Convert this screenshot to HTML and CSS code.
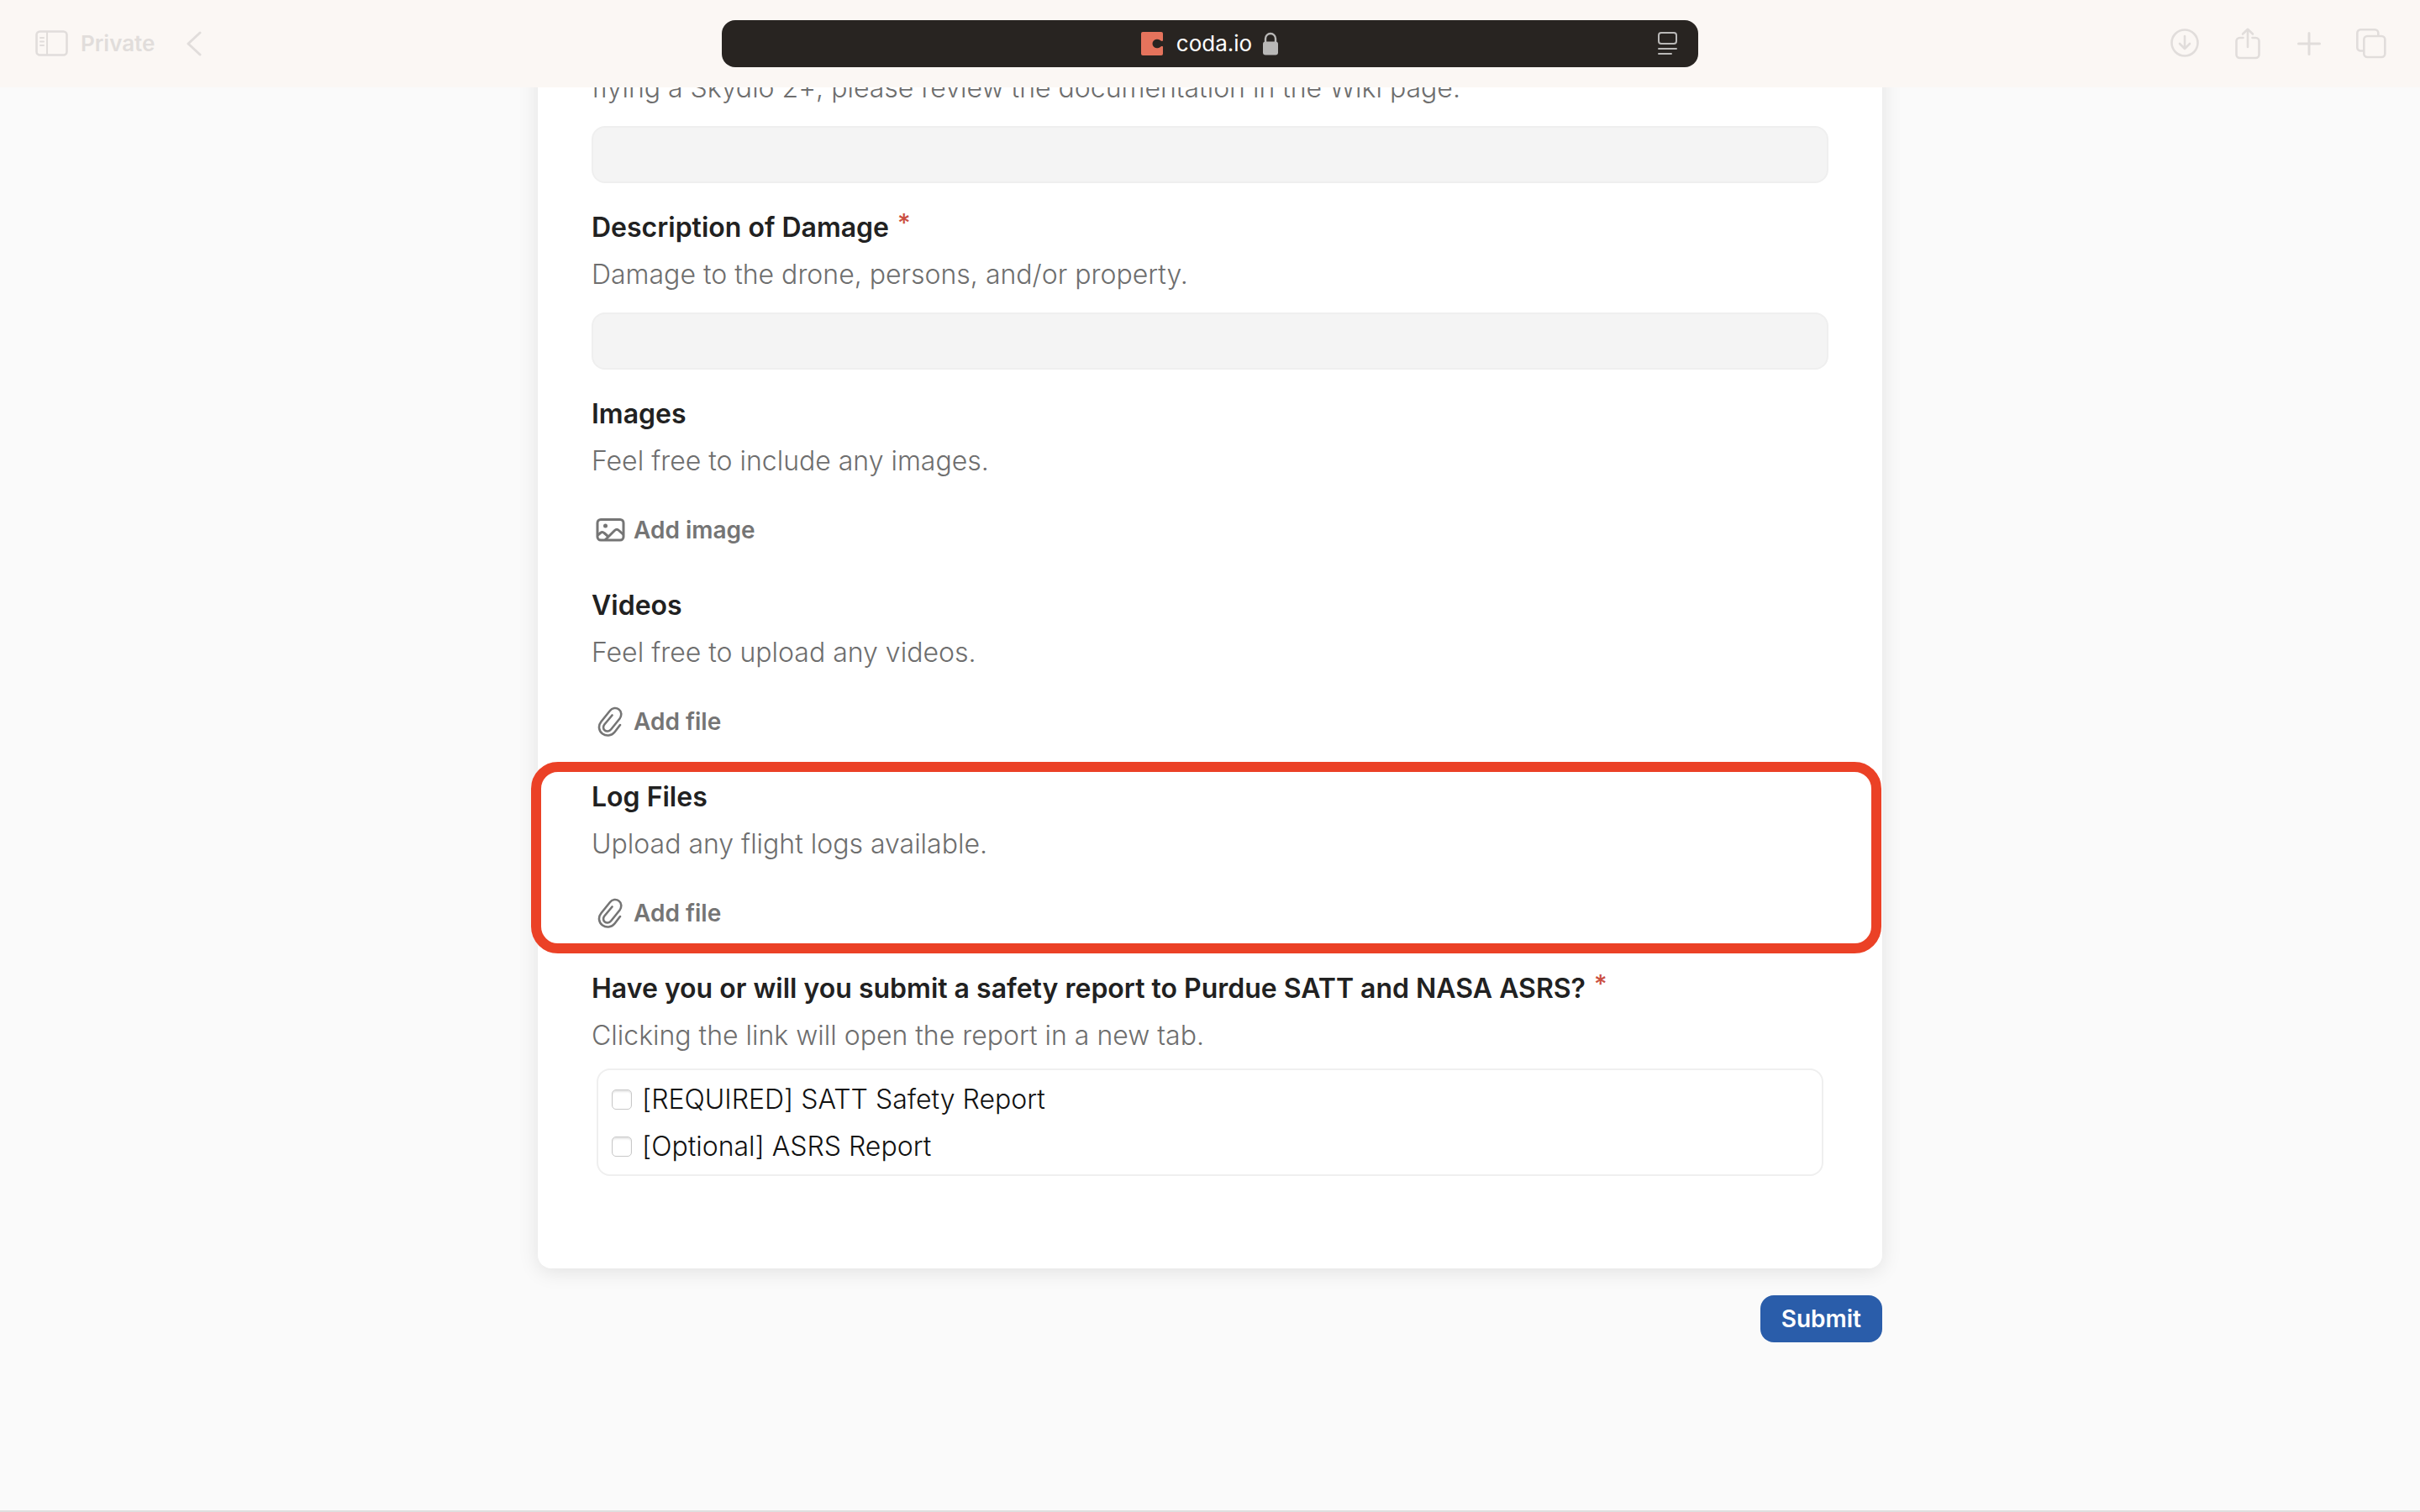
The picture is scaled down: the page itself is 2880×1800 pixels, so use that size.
FILE: index.html
```html
<!DOCTYPE html>
<html lang="en">
<head>
<meta charset="utf-8">
<meta name="viewport" content="width=device-width, initial-scale=1">
<title>coda.io</title>
<link rel="stylesheet" href="styles.css">
</head>
<body>
<svg class="sprite" aria-hidden="true">
  <symbol id="clip" viewBox="0 0 36 36"><path transform="translate(1 0)" fill="none" stroke="currentColor" stroke-width="2.600" stroke-linecap="round" stroke-linejoin="round" d="M29 22 L22.500 30.500 C18.500 35.500 12 35.500 8 32.500 C3.500 29 2.500 23 6.500 18 L17 5 C19.500 1.500 24.500 1 27.500 3.500 C31 6 31 11 28.500 14.500 L18 27.500 C16 30 12.500 30 10.800 28.500 C8.700 27 8.500 23.800 10.300 21.500 L19.500 10.500"/></symbol>
</svg>
<header class="toolbar">
  <nav class="tools tools-left" aria-label="Window">
    <button class="tool tool-private" type="button">
      <svg width="40" height="32" viewBox="0 0 40 32" fill="none" stroke="currentColor" stroke-width="2" stroke-linecap="round"><rect x="1.500" y="1.500" width="36" height="28" rx="4" stroke-width="2.600"/><path d="M14 2v27M6 9h4M6 13.500h4M6 18h4"/></svg>
      <span>Private</span>
    </button>
    <button class="tool" type="button" aria-label="Back">
      <svg width="18" height="30" viewBox="0 0 18 30" fill="none" stroke="currentColor" stroke-width="3" stroke-linecap="round" stroke-linejoin="round"><path d="M16 2 2 15l14 13"/></svg>
    </button>
  </nav>
  <div class="address">
    <a class="site" href="#">
      <svg class="favicon" width="26" height="28" viewBox="0 0 26 28"><path fill="#e5735c" d="M2 0h22a2 2 0 0 1 2 2v8.500c-1.500 1-2.500 0-3.500-.8C21 8.700 19.500 8.500 18.500 8.700 15.500 9 13.500 11.300 13.500 14s2 5 5 5.300c1 .2 2.500 0 4-1 1-.8 2-1.800 3.500-.8V26a2 2 0 0 1-2 2H2a2 2 0 0 1-2-2V2a2 2 0 0 1 2-2z"/></svg>
      <span>coda.io</span>
      <svg width="20" height="28" viewBox="0 0 20 28"><path d="M4 13V8a6 6 0 0 1 12 0v5" fill="none" stroke="#b9b8b7" stroke-width="2.400"/><rect x="1" y="11.500" width="18" height="16" rx="3" fill="#b9b8b7"/></svg>
    </a>
    <button class="reader" type="button" aria-label="Reader">
      <svg width="24" height="30" viewBox="0 0 24 30" fill="none" stroke="currentColor" stroke-width="2" stroke-linecap="round"><rect x="1" y="2" width="21" height="13" rx="3"/><path d="M1 21h21M1 27h15"/></svg>
    </button>
  </div>
  <nav class="tools tools-right" aria-label="Page">
    <button class="tool" type="button" aria-label="Downloads">
      <svg width="36" height="38" viewBox="0 0 36 38" fill="none" stroke="currentColor" stroke-width="2.600" stroke-linecap="round" stroke-linejoin="round"><circle cx="18" cy="18" r="15.500"/><path d="M18 10v15M12 19l6 6 6-6"/></svg>
    </button>
    <button class="tool" type="button" aria-label="Share">
      <svg width="32" height="38" viewBox="0 0 32 38" fill="none" stroke="currentColor" stroke-width="2.600" stroke-linecap="round" stroke-linejoin="round"><path d="M9.500 12H5.500a4 4 0 0 0-4 4v16a4 4 0 0 0 4 4h19a4 4 0 0 0 4-4V16a4 4 0 0 0-4-4H20.500M15 23V2M9 7.500 15 1.800l6 5.700"/></svg>
    </button>
    <button class="tool" type="button" aria-label="New tab">
      <svg width="28" height="28" viewBox="0 0 28 28" fill="none" stroke="currentColor" stroke-width="3" stroke-linecap="round"><path d="M14 1.500v25M1.500 14h25"/></svg>
    </button>
    <button class="tool" type="button" aria-label="Tab overview">
      <svg width="36" height="36" viewBox="0 0 36 36" fill="none" stroke="currentColor" stroke-width="2.600" stroke-linejoin="round"><rect x="9.300" y="9" width="25" height="25" rx="4"/><path d="M9 26.500H5.300a4 4 0 0 1-4-4V5.300a4 4 0 0 1 4-4h17a4 4 0 0 1 4 4V9"/></svg>
    </button>
  </nav>
</header>
<main class="page">
  <form class="form">
    <div class="card">
      <div class="field">
        <label class="hint" for="drone">flying a Skydio 2+, please review the documentation in the Wiki page.</label>
        <input class="input" id="drone" type="text">
      </div>
      <div class="field">
        <label class="label" for="damage">Description of Damage <span class="star">*</span></label>
        <p class="hint">Damage to the drone, persons, and/or property.</p>
        <input class="input" id="damage" type="text">
      </div>
      <section class="field">
        <h2 class="label">Images</h2>
        <p class="hint">Feel free to include any images.</p>
        <button class="add" type="button">
          <svg class="add-icon" viewBox="0 0 36 36" fill="none" stroke="currentColor" stroke-width="3" stroke-linejoin="round"><rect x="3" y="5.500" width="31" height="24.500" rx="4"/><path d="M3.500 24 6.500 21.500Q9 19.500 11 21.500L15 25M12 30 23.500 18.500Q26 16 28.500 18.500L34 23.500"/><circle cx="12.500" cy="13" r="2.500" fill="currentColor" stroke="none"/></svg>
          <span>Add image</span>
        </button>
      </section>
      <section class="field">
        <h2 class="label">Videos</h2>
        <p class="hint">Feel free to upload any videos.</p>
        <button class="add" type="button"><svg class="add-icon"><use href="#clip"/></svg><span>Add file</span></button>
      </section>
      <section class="field marked">
        <h2 class="label">Log Files</h2>
        <p class="hint">Upload any flight logs available.</p>
        <button class="add" type="button"><svg class="add-icon"><use href="#clip"/></svg><span>Add file</span></button>
      </section>
      <section class="field">
        <h2 class="label">Have you or will you submit a safety report to Purdue SATT and NASA ASRS? <span class="star">*</span></h2>
        <p class="hint">Clicking the link will open the report in a new tab.</p>
        <div class="options">
          <label class="option"><input class="check" type="checkbox">[REQUIRED] SATT Safety Report</label>
          <label class="option"><input class="check" type="checkbox">[Optional] ASRS Report</label>
        </div>
      </section>
    </div>
    <button class="submit" type="button">Submit</button>
  </form>
</main>
</body>
</html>
```
FILE: styles.css
```css
* { box-sizing: border-box; }

body {
  margin: 0;
  min-height: 100vh;
  background: #fafafa;
  border-bottom: 2px solid #dfdfdf;
  font: 400 32px/56px Inter, "Liberation Sans", sans-serif;
  font-variant-ligatures: no-contextual;
  color: #212121;
}

button {
  font: inherit;
  color: inherit;
  border: 0;
  padding: 0;
  background: none;
}

svg { display: block; flex: none; }

.sprite { position: absolute; width: 0; height: 0; }

/* Browser toolbar, laid over the scrolled page */
.toolbar {
  position: fixed;
  top: 0;
  left: 0;
  right: 0;
  z-index: 2;
  height: 104px;
  padding: 0 40px;
  display: grid;
  grid-template-columns: 1fr minmax(0, 1162px) 1fr;
  align-items: center;
  background: #fbf7f4;
  color: #e1dddb;
}

.tools { display: flex; align-items: center; }
.tools-left { gap: 38px; padding-left: 2px; }
.tools-right { gap: 42px; justify-content: flex-end; }

.tool-private {
  display: flex;
  align-items: center;
  gap: 14px;
  font-size: 26px;
  font-weight: 600;
}

.address {
  height: 56px;
  padding: 0 24px;
  display: grid;
  grid-template-columns: 1fr auto 1fr;
  align-items: center;
  border-radius: 16px;
  background: #282421;
}

.site {
  grid-column: 2;
  display: flex;
  align-items: center;
  gap: 12px;
  font-size: 26px;
  font-weight: 400;
  color: #fff;
  text-decoration: none;
}

.favicon { margin-right: 4px; }

.reader { justify-self: end; color: #b9b8b7; }

/* Form */
.form {
  max-width: 1600px;
  margin: 0 auto;
  display: flex;
  flex-direction: column;
}

.card {
  padding: 77px 64px 110px;
  display: flex;
  flex-direction: column;
  gap: 25px;
  border-radius: 0 0 16px 16px;
  background: #fff;
  box-shadow: 0 4px 24px rgba(0, 0, 0, 0.1);
}

.field {
  position: relative;
  display: flex;
  flex-direction: column;
}

.label { margin: 0; font-size: 32px; font-weight: 600; }
.hint { margin: 0; font-weight: 300; color: #6e6e6e; }

.star {
  margin-left: 2px;
  font-size: 30px;
  font-weight: 500;
  line-height: 1;
  vertical-align: 6px;
  color: #cb4f41;
}

.input {
  height: 68px;
  margin-top: 17px;
  padding: 0 16px;
  font: inherit;
  border: 2px solid #efefef;
  border-radius: 16px;
  background: #f4f4f4;
}

.add {
  align-self: flex-start;
  height: 74px;
  margin-top: 17px;
  padding-left: 4px;
  display: flex;
  align-items: center;
  gap: 10px;
  font-size: 28px;
  font-weight: 600;
  color: #757575;
}

.add-icon { width: 36px; height: 36px; }

/* Red frame drawn round the highlighted field */
.marked::after {
  content: "";
  position: absolute;
  inset: -14px -63px -11px -72px;
  border: 12px solid #eb4126;
  border-radius: 32px;
  pointer-events: none;
}

.options {
  margin: 11px 6px 0;
  padding: 7px 16px 5px;
  border: 2px solid #efefef;
  border-radius: 16px;
}

.option {
  display: flex;
  align-items: center;
  gap: 12px;
  font-weight: 300;
  color: #111;
}

.check {
  appearance: none;
  width: 24px;
  height: 24px;
  margin: 0;
  border: 1px solid #c8c8c8;
  border-radius: 5px;
  background: #fff;
  box-shadow: inset 0 2px 2px rgba(0, 0, 0, 0.1);
}

.submit {
  align-self: flex-end;
  height: 56px;
  margin-top: 32px;
  padding: 0 25px;
  font-size: 28px;
  font-weight: 600;
  border-radius: 16px;
  background: #2a5daa;
  color: #fff;
}
```
